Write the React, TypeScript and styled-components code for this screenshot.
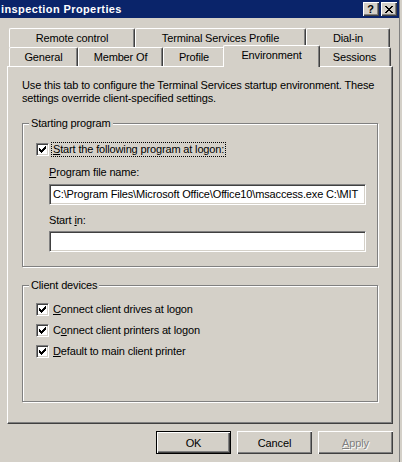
import React from "react";
import styled, { createGlobalStyle } from "styled-components";

const GlobalStyle = createGlobalStyle`
    html, body {
        margin: 0;
        padding: 0;
        background: #d4d0c8;
    }
    body {
        font-family: Tahoma, "Liberation Sans", Arial, sans-serif;
        font-size: 11px;
        letter-spacing: -0.15px;
        color: #000;
    }
`;

// Window frame
const Window = styled.div`
    width: 402px;
    height: 462px;
    background: #d4d0c8;
    overflow: hidden;
`;

const Frame = styled.div`
    width: 399px;
    height: 462px;
    border-right: 1px solid #808080;
    display: flex;
    flex-direction: column;
`;

const TitleBar = styled.div`
    height: 18px;
    background: #0a246a;
    display: flex;
    align-items: center;
    justify-content: space-between;
    padding: 0 2px 0 1px;
`;

const TitleText = styled.span`
    color: #fff;
    font-weight: bold;
    letter-spacing: 0.4px;
    line-height: 18px;
`;

const CaptionButtons = styled.div`
    display: flex;
    gap: 2px;
`;

const raised = "inset 1px 1px #fff, inset -1px -1px #404040, inset -2px -2px #808080";

const CaptionButton = styled.div`
    width: 16px;
    height: 14px;
    box-sizing: border-box;
    background: #d4d0c8;
    box-shadow: ${raised};
    display: flex;
    align-items: center;
    justify-content: center;
    font-weight: bold;
    font-size: 11px;
    line-height: 14px;
    padding-right: 1px;
`;

// Tabs
const TabStrip = styled.div`
    margin-top: 10px;
    padding-left: 9px;
    display: flex;
    flex-direction: column;
`;

const TabRow = styled.div`
    display: flex;
    height: 19px;
`;

const Tab = styled.div<{ $width: number; $selected?: boolean }>`
    width: ${(p) => p.$width}px;
    box-sizing: border-box;
    height: ${(p) => (p.$selected ? 22 : 19)}px;
    margin: ${(p) => (p.$selected ? "-2px -2px -1px -2px" : "0")};
    position: relative;
    z-index: ${(p) => (p.$selected ? 2 : 0)};
    background: #d4d0c8;
    border-top: 1px solid #fff;
    border-left: 1px solid #fff;
    border-right: 1px solid #404040;
    border-radius: 2px 2px 0 0;
    box-shadow: inset -1px 0 #808080;
    text-align: center;
    line-height: 16px;
    padding-top: 1px;
    white-space: nowrap;
`;

// Panel
const Panel = styled.div`
    margin-left: 7px;
    width: 386px;
    height: 358px;
    box-sizing: border-box;
    border-top: 1px solid #fff;
    border-left: 1px solid #fff;
    border-right: 1px solid #404040;
    border-bottom: 1px solid #404040;
    box-shadow: inset -1px -1px #808080;
    padding: 12px 0 0 14px;
    position: relative;
    z-index: 1;
`;

const Description = styled.div`
    line-height: 13px;
    white-space: nowrap;
`;

const GroupBox = styled.div<{ $height: number; $top: number; $padTop: number }>`
    position: relative;
    width: 356px;
    height: ${(p) => p.$height}px;
    margin-top: ${(p) => p.$top}px;
    box-sizing: border-box;
    border: 1px solid #808080;
    box-shadow: inset 1px 1px #fff, 1px 1px #fff;
    padding: ${(p) => p.$padTop}px 0 0 13px;
`;

const GroupLabel = styled.span`
    position: absolute;
    top: -7px;
    left: 6px;
    padding: 0 2px;
    line-height: 13px;
    background: #d4d0c8;
`;

const CheckRow = styled.div<{ $height: number }>`
    display: flex;
    align-items: center;
    height: ${(p) => p.$height}px;
`;

const CheckBoxBox = styled.div`
    width: 13px;
    height: 13px;
    box-sizing: border-box;
    background: #fff;
    border-top: 1px solid #808080;
    border-left: 1px solid #808080;
    border-right: 1px solid #fff;
    border-bottom: 1px solid #fff;
    box-shadow: inset 1px 1px #404040, inset -1px -1px #d4d0c8;
    display: flex;
    align-items: center;
    justify-content: center;
    flex: none;
`;

const CheckLabel = styled.span<{ $focused?: boolean }>`
    margin-left: 2px;
    padding: 0 1px;
    line-height: 13px;
    border: 1px dotted ${(p) => (p.$focused ? "#000" : "transparent")};
    white-space: nowrap;
`;

const Indent = styled.div`
    padding-left: 13px;
`;

const FieldLabel = styled.div<{ $top: number }>`
    margin-top: ${(p) => p.$top}px;
    line-height: 13px;
`;

const TextBox = styled.div<{ $top: number }>`
    margin-top: ${(p) => p.$top}px;
    width: 317px;
    height: 21px;
    box-sizing: border-box;
    background: #fff;
    border-top: 1px solid #808080;
    border-left: 1px solid #808080;
    border-right: 1px solid #fff;
    border-bottom: 1px solid #fff;
    box-shadow: inset 1px 1px #404040, inset -1px -1px #d4d0c8;
    padding: 0 2px 0 3px;
    line-height: 19px;
    white-space: nowrap;
    overflow: hidden;
`;

const Key = styled.u`
    text-decoration: underline;
`;

// Bottom buttons
const ButtonRow = styled.div`
    display: flex;
    justify-content: flex-end;
    gap: 6px;
    margin-top: 7px;
    padding-right: 6px;
`;

const Button = styled.div<{ $default?: boolean; $disabled?: boolean }>`
    width: 75px;
    height: 23px;
    box-sizing: border-box;
    border: ${(p) => (p.$default ? "1px solid #000" : "none")};
    box-shadow: ${raised};
    display: flex;
    align-items: center;
    justify-content: center;
    color: ${(p) => (p.$disabled ? "#808080" : "#000")};
    text-shadow: ${(p) => (p.$disabled ? "1px 1px #fff" : "none")};
`;

const Check = () => (
    <svg width="7" height="7" viewBox="0 0 7 7" shapeRendering="crispEdges">
        <path
            d="M0 2h1v3h-1z M1 3h1v3h-1z M2 4h1v3h-1z M3 3h1v3h-1z M4 2h1v3h-1z M5 1h1v3h-1z M6 0h1v3h-1z"
            fill="#000"
        />
    </svg>
);

const CheckBox: React.FC<{ height: number; focused?: boolean; children: React.ReactNode }> = ({
    height,
    focused,
    children,
}) => (
    <CheckRow $height={height}>
        <CheckBoxBox>
            <Check />
        </CheckBoxBox>
        <CheckLabel $focused={focused}>{children}</CheckLabel>
    </CheckRow>
);

const programPath = "C:\\Program Files\\Microsoft Office\\Office10\\msaccess.exe C:\\MIT";

const App: React.FC = () => {
    return (
        <Window>
            <GlobalStyle />
            <Frame>
                <TitleBar>
                    <TitleText>inspection Properties</TitleText>
                    <CaptionButtons>
                        <CaptionButton>?</CaptionButton>
                        <CaptionButton>
                            <svg width="8" height="7" viewBox="0 0 8 7" shapeRendering="crispEdges">
                                <path
                                    d="M0 0h2v1h-2z M1 1h2v1h-2z M2 2h2v1h-2z M3 3h2v1h-2z M2 4h2v1h-2z M1 5h2v1h-2z M0 6h2v1h-2z M6 0h2v1h-2z M5 1h2v1h-2z M4 2h2v1h-2z M4 4h2v1h-2z M5 5h2v1h-2z M6 6h2v1h-2z"
                                    fill="#000"
                                />
                            </svg>
                        </CaptionButton>
                    </CaptionButtons>
                </TitleBar>

                <TabStrip>
                    <TabRow>
                        <Tab $width={126}>Remote control</Tab>
                        <Tab $width={171}>Terminal Services Profile</Tab>
                        <Tab $width={84}>Dial-in</Tab>
                    </TabRow>
                    <TabRow>
                        <Tab $width={69}>General</Tab>
                        <Tab $width={85}>Member Of</Tab>
                        <Tab $width={62}>Profile</Tab>
                        <Tab $width={97} $selected>
                            Environment
                        </Tab>
                        <Tab $width={73}>Sessions</Tab>
                    </TabRow>
                </TabStrip>

                <Panel>
                    <Description>
                        Use this tab to configure the Terminal Services startup environment. These
                        <br />
                        settings override client-specified settings.
                    </Description>

                    <GroupBox $height={144} $top={18} $padTop={17}>
                        <GroupLabel>Starting program</GroupLabel>
                        <CheckBox height={17} focused>
                            <Key>S</Key>tart the following program at logon:
                        </CheckBox>
                        <Indent>
                            <FieldLabel $top={8}>
                                <Key>P</Key>rogram file name:
                            </FieldLabel>
                            <TextBox $top={5}>{programPath}</TextBox>
                            <FieldLabel $top={9}>
                                Start <Key>i</Key>n:
                            </FieldLabel>
                            <TextBox $top={4} />
                        </Indent>
                    </GroupBox>

                    <GroupBox $height={117} $top={18} $padTop={13}>
                        <GroupLabel>Client devices</GroupLabel>
                        <CheckBox height={21}>
                            <Key>C</Key>onnect client drives at logon
                        </CheckBox>
                        <CheckBox height={21}>
                            C<Key>o</Key>nnect client printers at logon
                        </CheckBox>
                        <CheckBox height={21}>
                            <Key>D</Key>efault to main client printer
                        </CheckBox>
                    </GroupBox>
                </Panel>

                <ButtonRow>
                    <Button $default>OK</Button>
                    <Button>Cancel</Button>
                    <Button $disabled>
                        <span>
                            <Key>A</Key>pply
                        </span>
                    </Button>
                </ButtonRow>
            </Frame>
        </Window>
    );
};

export default App;
